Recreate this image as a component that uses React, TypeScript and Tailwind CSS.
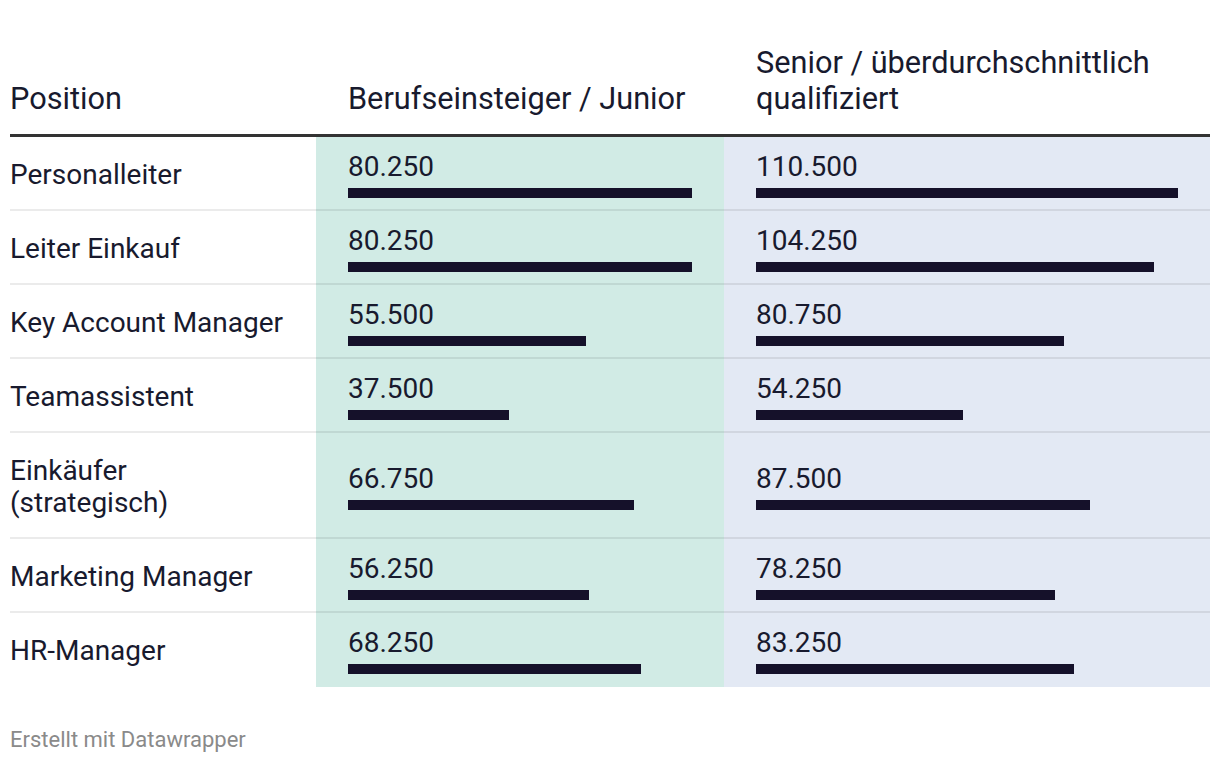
import React from "react";

type Row = { name: string; junior: number; senior: number };

const rows: Row[] = [
  { name: "Personalleiter", junior: 80.25, senior: 110.5 },
  { name: "Leiter Einkauf", junior: 80.25, senior: 104.25 },
  { name: "Key Account Manager", junior: 55.5, senior: 80.75 },
  { name: "Teamassistent", junior: 37.5, senior: 54.25 },
  { name: "Einkäufer (strategisch)", junior: 66.75, senior: 87.5 },
  { name: "Marketing Manager", junior: 56.25, senior: 78.25 },
  { name: "HR-Manager", junior: 68.25, senior: 83.25 },
];

const fmt = (v: number) => {
  const n = Math.round(v * 1000);
  return n.toString().replace(/\B(?=(\d{3})+(?!\d))/g, ".");
};

const JMAX = 80.25;
const SMAX = 110.5;
const JW = 344;
const SW = 422;

function Cell({
  value,
  max,
  width,
  bg,
  last,
}: {
  value: number;
  max: number;
  width: number;
  bg: string;
  last: boolean;
}) {
  return (
    <div
      className={`${bg} ${last ? "border-b-2 border-transparent" : "border-b-2 border-black/[0.08]"} flex items-center px-[32px]`}
    >
      <div className="w-full pt-[3px]">
        <div className="leading-[32px]">{fmt(value)}</div>
        <div
          className="mt-[5px] h-[10px] bg-[#15112a]"
          style={{ width: `${(value / max) * width}px` }}
        />
      </div>
    </div>
  );
}

export default function App() {
  return (
    <div
      className="bg-white w-[1220px] h-[762px] px-[10px] pt-[45px] text-[#181a2e]"
      style={{ fontFamily: "Roboto, 'Liberation Sans', sans-serif" }}
    >
      <div className="grid grid-cols-[306px_408px_486px] text-[28px] leading-[32px]">
        <div className="flex items-end pb-[17px] border-b-[3px] border-[#333333] text-[30.7px] leading-[36px]">
          Position
        </div>
        <div className="flex items-end pb-[17px] pl-[32px] border-b-[3px] border-[#333333] text-[30.7px] leading-[36px]">
          Berufseinsteiger / Junior
        </div>
        <div className="flex items-end pb-[17px] pl-[32px] border-b-[3px] border-[#333333] text-[30.7px] leading-[36px]">
          Senior / überdurchschnittlich qualifiziert
        </div>
        {rows.map((r, i) => {
          const last = i === rows.length - 1;
          return (
            <React.Fragment key={r.name}>
              <div
                className={`flex items-center ${last ? "border-b-2 border-transparent" : "border-b-2 border-black/[0.08]"} pt-[22px] pb-[18px] whitespace-nowrap`}
              >
                {r.name === "Einkäufer (strategisch)" ? (
                  <span>
                    Einkäufer
                    <br />
                    (strategisch)
                  </span>
                ) : (
                  r.name
                )}
              </div>
              <Cell value={r.junior} max={JMAX} width={JW} bg="bg-[#d1ebe5]" last={last} />
              <Cell value={r.senior} max={SMAX} width={SW} bg="bg-[#e3e9f4]" last={last} />
            </React.Fragment>
          );
        })}
      </div>
      <div className="mt-[40px] text-[22px] leading-[26px] text-[#8a8a8a]">
        Erstellt mit Datawrapper
      </div>
    </div>
  );
}
